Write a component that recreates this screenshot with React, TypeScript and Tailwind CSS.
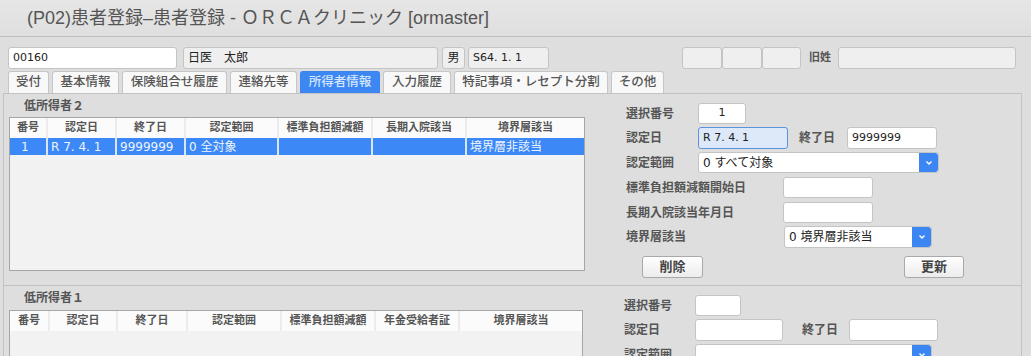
import React from "react";

const F = "font-['DejaVu_Sans','Noto_Sans_CJK_JP',sans-serif]";

function Chevron() {
  return (
    <svg width="8" height="6" viewBox="0 0 8 6">
      <path d="M1.5 1.5 L4 4 L6.5 1.5" fill="none" stroke="#ffffff" strokeWidth="1.4" />
    </svg>
  );
}

function Input({ w, h = 21, value = "", focused = false, gray = false, center = false }: { w: number; h?: number; value?: string; focused?: boolean; gray?: boolean; center?: boolean }) {
  return (
    <div
      className={`flex items-center shrink-0 rounded-[3px] border px-[4px] text-[11px] text-[#222] ${
        focused ? "border-[#5b93dc] bg-[#dde9f8]" : gray ? "border-[#c4c4c4] bg-[#efefef]" : "border-[#c4c4c4] bg-white"
      } ${center ? "justify-center" : ""}`}
      style={{ width: w, height: h }}
    >
      {value}
    </div>
  );
}

function Select({ w, h = 21, value = "" }: { w: number; h?: number; value?: string }) {
  return (
    <div className="flex shrink-0 rounded-[3px] border border-[#c4c4c4] bg-white" style={{ width: w, height: h }}>
      <div className="flex flex-1 items-center pl-[4px] text-[12px] text-[#222]">{value}</div>
      <div className="flex w-[19px] items-center justify-center rounded-r-[3px] bg-[#3b86f2]">
        <Chevron />
      </div>
    </div>
  );
}

function Label({ w, children }: { w: number; children: React.ReactNode }) {
  return (
    <div className="shrink-0 text-[12px] font-semibold text-[#555]" style={{ width: w }}>
      {children}
    </div>
  );
}

function Btn({ children, w }: { children: React.ReactNode; w: number }) {
  return (
    <div
      className="flex h-[22px] items-center justify-center rounded-[3px] border border-[#a9a9a9] bg-gradient-to-b from-[#ffffff] to-[#ececec] text-[13px] font-semibold text-[#444]"
      style={{ width: w }}
    >
      {children}
    </div>
  );
}

type Col = { t: string; w: number };

function Table({ cols, w, h, row }: { cols: Col[]; w: number; h?: number; row?: string[] }) {
  return (
    <div className="shrink-0 border border-[#a6a6a6] bg-[#f2f2f2]" style={{ width: w, height: h }}>
      <div className="flex h-[20px] bg-[#fbfbfb]">
        {cols.map((c, i) => (
          <div
            key={i}
            className={`flex items-center justify-center text-[11px] font-semibold text-[#555] ${
              i < cols.length - 1 ? "border-r-2 border-[#ececec]" : ""
            }`}
            style={{ width: c.w, flexGrow: i === cols.length - 1 ? 1 : 0 }}
          >
            {c.t}
          </div>
        ))}
      </div>
      {row && (
        <div className="flex h-[17px] bg-[#d8e6f7]">
          {cols.map((c, i) => (
            <div
              key={i}
              className={`flex items-center bg-[#3b88f6] text-[12px] text-[#eef4ff] ${
                i < cols.length - 1 ? "mr-[2px]" : ""
              } ${i === 0 ? "pl-[11px]" : "pl-[3px]"}`}
              style={{ width: i < cols.length - 1 ? c.w - 2 : undefined, flexGrow: i === cols.length - 1 ? 1 : 0 }}
            >
              {row[i]}
            </div>
          ))}
        </div>
      )}
    </div>
  );
}

const tabs: { t: string; w: number; sel?: boolean }[] = [
  { t: "受付", w: 41 },
  { t: "基本情報", w: 67 },
  { t: "保険組合せ履歴", w: 105 },
  { t: "連絡先等", w: 67 },
  { t: "所得者情報", w: 80, sel: true },
  { t: "入力履歴", w: 68 },
  { t: "特記事項・レセプト分割", w: 154 },
  { t: "その他", w: 53 },
];

export default function App() {
  const cols1: Col[] = [
    { t: "番号", w: 38 },
    { t: "認定日", w: 69 },
    { t: "終了日", w: 69 },
    { t: "認定範囲", w: 93 },
    { t: "標準負担額減額", w: 94 },
    { t: "長期入院該当", w: 94 },
    { t: "境界層該当", w: 114 },
  ];
  const cols2: Col[] = [
    { t: "番号", w: 40 },
    { t: "認定日", w: 68 },
    { t: "終了日", w: 70 },
    { t: "認定範囲", w: 94 },
    { t: "標準負担額減額", w: 94 },
    { t: "年金受給者証", w: 84 },
    { t: "境界層該当", w: 119 },
  ];
  return (
    <div className={`h-[356px] w-[1031px] overflow-hidden bg-[#dedede] ${F}`}>
      {/* title bar */}
      <div className="flex h-[37px] items-center border-b border-[#bdbdbd] bg-gradient-to-b from-[#e6e6e6] to-[#dfdfdf] pl-[27px] font-['Liberation_Sans','Noto_Sans_CJK_JP',sans-serif] text-[18px] text-[#555]">
        (P02)患者登録–患者登録 - ＯＲＣＡクリニック [ormaster]
      </div>

      {/* patient row */}
      <div className="mt-[10px] flex h-[22px] items-stretch pl-[8px]">
        <Input w={169} h={22} value="00160" />
        <div className="ml-[6px]">
          <div className="flex h-[22px] w-[255px] items-center rounded-[3px] border border-[#c4c4c4] bg-[#efefef] px-[4px] text-[12px] text-[#222]">
            日医　太郎
          </div>
        </div>
        <div className="ml-[4px] flex h-[22px] w-[23px] items-center justify-center rounded-[3px] border border-[#c4c4c4] bg-[#efefef] text-[12px] text-[#222]">
          男
        </div>
        <div className="ml-[3px]">
          <Input w={81} h={22} value="S64. 1. 1" gray />
        </div>
        <div className="ml-[133px] flex">
          <Input w={40} h={22} gray />
          <Input w={40} h={22} gray />
          <Input w={39} h={22} gray />
        </div>
        <div className="ml-[8px] flex w-[29px] items-center text-[11px] font-semibold text-[#555]">旧姓</div>
        <Input w={178} h={22} gray />
      </div>

      {/* tabs */}
      <div className="mt-[2px] flex h-[22px] gap-[3px] pl-[8px]">
        {tabs.map((t) => (
          <div
            key={t.t}
            className={`flex items-center justify-center rounded-t-[3px] border border-b-0 text-[12.5px] font-medium ${
              t.sel ? "border-[#3b84ee] bg-[#3d87f3] text-[#d6e6ff]" : "border-[#c6c6c6] bg-[#f8f8f8] text-[#555]"
            }`}
            style={{ width: t.w }}
          >
            {t.t}
          </div>
        ))}
      </div>

      {/* panel */}
      <div className="ml-[3px] w-[1019px] border-l border-r border-t border-[#c2c2c2]">
        {/* section 1 */}
        <div className="flex h-[192px] border-b border-[#c2c2c2]">
          <div className="flex flex-col pl-[5px]">
            <div className="flex h-[23px] shrink-0 items-center pl-[15px] text-[12px] font-semibold text-[#555]">低所得者２</div>
            <Table
              cols={cols1}
              w={576}
              h={154}
              row={["1", "R 7. 4. 1", "9999999", "0 全対象", "", "", "境界層非該当"]}
            />
          </div>
          <div className="ml-[41px] flex flex-col pt-[9px]">
            <div className="flex h-[21px] items-center">
              <Label w={72}>選択番号</Label>
              <Input w={48} value="1" center />
            </div>
            <div className="mt-[3px] flex h-[22px] items-center">
              <Label w={72}>認定日</Label>
              <Input w={90} h={22} value="R 7. 4. 1" focused />
              <div className="ml-[11px]">
                <Label w={48}>終了日</Label>
              </div>
              <Input w={90} h={22} value="9999999" />
            </div>
            <div className="mt-[3px] flex h-[21px] items-center">
              <Label w={72}>認定範囲</Label>
              <Select w={241} value="0 すべて対象" />
            </div>
            <div className="mt-[4px] flex h-[21px] items-center">
              <Label w={157}>標準負担額減額開始日</Label>
              <Input w={90} />
            </div>
            <div className="mt-[4px] flex h-[21px] items-center">
              <Label w={157}>長期入院該当年月日</Label>
              <Input w={90} />
            </div>
            <div className="mt-[3px] flex h-[22px] items-center">
              <Label w={158}>境界層該当</Label>
              <Select w={148} h={22} value="0 境界層非該当" />
            </div>
            <div className="mt-[8px] flex pl-[16px]">
              <Btn w={61}>削除</Btn>
              <div className="ml-[201px]">
                <Btn w={60}>更新</Btn>
              </div>
            </div>
          </div>
        </div>

        {/* section 2 */}
        <div className="flex h-[80px]">
          <div className="flex flex-col pl-[5px]">
            <div className="flex h-[24px] shrink-0 items-center pl-[15px] text-[12px] font-semibold text-[#555]">低所得者１</div>
            <Table cols={cols2} w={574} h={80} />
          </div>
          <div className="ml-[41px] flex flex-col pt-[9px]">
            <div className="flex h-[21px] shrink-0 items-center">
              <Label w={71}>選択番号</Label>
              <Input w={46} />
            </div>
            <div className="mt-[3px] flex h-[22px] shrink-0 items-center">
              <Label w={71}>認定日</Label>
              <Input w={88} h={22} />
              <div className="ml-[19px]">
                <Label w={47}>終了日</Label>
              </div>
              <Input w={89} h={22} />
            </div>
            <div className="mt-[3px] flex h-[21px] shrink-0 items-center">
              <Label w={71}>認定範囲</Label>
              <Select w={237} />
            </div>
          </div>
        </div>
      </div>
    </div>
  );
}
